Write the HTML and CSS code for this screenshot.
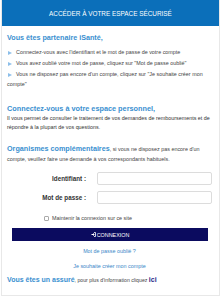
FILE: index.html
```html
<!DOCTYPE html>
<html lang="fr">

<head>
    <meta charset="UTF-8">
    <meta name="viewport" content="width=device-width, initial-scale=1.0">
    <title>Accès espace sécurisé</title>
    <link rel="stylesheet" href="styles.css">
</head>

<body>
    <div class="card">
        <div class="card-head">ACCÉDER À VOTRE ESPACE SÉCURISÉ</div>
        <div class="card-body">
            <h2 class="title-first">Vous êtes partenaire iSanté,</h2>
            <ul class="steps">
                <li><span class="arrow"></span>Connectez-vous avec l'identifiant et le mot de passe de votre compte</li>
                <li><span class="arrow"></span>Vous avez oublié votre mot de passe, cliquez sur "Mot de passe oublié"</li>
                <li><span class="arrow"></span>Vous ne disposez pas encore d'un compte, cliquez sur "Je souhaite créer mon compte"</li>
            </ul>

            <h2 class="title-second">Connectez-vous à votre espace personnel,</h2>
            <p class="intro">Il vous permet de consulter le traitement de vos demandes de remboursements et de répondre à la plupart de vos questions.</p>

            <p class="orgs"><strong>Organismes complémentaires</strong>, si vous ne disposez pas encore d'un compte, veuillez faire une demande à vos correspondants habituels.</p>

            <form class="login" onsubmit="return false;">
                <div class="field">
                    <label for="login">Identifiant :</label>
                    <input type="text" id="login">
                </div>
                <div class="field">
                    <label for="password">Mot de passe :</label>
                    <input type="password" id="password">
                </div>
                <div class="remember">
                    <input type="checkbox" id="remember">
                    <label for="remember">Maintenir la connexion sur ce site</label>
                </div>
                <button type="submit" class="btn-login">
                    <svg width="5" height="5" viewBox="0 0 10 10">
                        <path d="M6 1h3v8H6" fill="none" stroke="#fff" stroke-width="1.6"/>
                        <path d="M1 4h3V2l3.5 3L4 8V6H1z" fill="#fff"/>
                    </svg>
                    CONNEXION
                </button>
            </form>

            <div class="links">
                <a href="#">Mot de passe oublié ?</a>
                <a href="#">Je souhaite créer mon compte</a>
            </div>

            <p class="insured"><strong>Vous êtes un assuré</strong>, pour plus d'information cliquez <a href="#">ici</a></p>
        </div>
    </div>
</body>

</html>
```

FILE: styles.css
```css
/* Base */
body {
    background-color: #fff;
    font-family: "Liberation Sans", Arial, sans-serif;
    margin: 0;
    padding: 0;
    color: #444;
}

.card {
    margin: 0 1px;
    height: 296px;
    box-sizing: border-box;
    border: 1px solid #e8e8e8;
    border-top: none;
}

.card-head {
    background-color: #0b6fba;
    color: #fff;
    text-align: center;
    font-size: 6.4px;
    line-height: 8px;
    padding: 10px 0 8px;
}

.card-body {
    padding: 0 7px 0 5px;
}

h2 {
    color: #3a90d0;
    font-size: 7.2px;
    line-height: 9px;
    margin: 0;
}

.title-first {
    margin-top: 7px;
}

.steps {
    list-style: none;
    margin: 5px 0 0;
    padding: 0;
    font-size: 5.4px;
    line-height: 10px;
}

.steps li {
    margin-bottom: 1px;
}

.arrow {
    display: inline-block;
    width: 0;
    height: 0;
    border-left: 4px solid #8dbfea;
    border-top: 2.5px solid transparent;
    border-bottom: 2.5px solid transparent;
    margin: 0 4px 0 1px;
    vertical-align: -1px;
}

.title-second {
    font-size: 7.3px;
    margin-top: 15px;
}

.intro {
    font-size: 5.4px;
    line-height: 8.5px;
    margin: 1px 0 0;
    color: #333;
}

.orgs {
    font-size: 5.4px;
    line-height: 10px;
    margin: 13px 0 0;
}

.orgs strong {
    color: #3a90d0;
    font-size: 7.2px;
    line-height: 8px;
}

.login {
    margin-top: 8px;
}

.field {
    display: flex;
    align-items: center;
    margin-bottom: 6px;
}

.field label {
    width: 79px;
    text-align: right;
    font-weight: bold;
    font-size: 6.3px;
    color: #333;
    margin-right: 11px;
}

.field input {
    flex: 1;
    height: 13px;
    box-sizing: border-box;
    border: 1px solid #dcdcdc;
    border-radius: 2px;
    margin: 0;
    padding: 0 3px;
    font-size: 6px;
}

.remember {
    display: flex;
    align-items: center;
    margin: 10px 0 0 37px;
    font-size: 5.4px;
    line-height: 8px;
}

.remember input {
    appearance: none;
    width: 5px;
    height: 5px;
    margin: 0 3px 0 0;
    border: 1px solid #aaa;
    border-radius: 1px;
    background: #fff;
}

.btn-login {
    display: flex;
    align-items: center;
    justify-content: center;
    gap: 1px;
    width: 196px;
    height: 13px;
    margin: 6px 0 0 5px;
    padding: 0;
    border: none;
    background-color: #0b0b5f;
    color: #fff;
    font-family: "Liberation Sans", Arial, sans-serif;
    font-size: 5.4px;
    cursor: pointer;
}

.links {
    display: flex;
    flex-direction: column;
    align-items: center;
    gap: 7px;
    margin-top: 6px;
    font-size: 5.4px;
    line-height: 8px;
}

.links a {
    color: #3a86c8;
    text-decoration: none;
}

.insured {
    margin: 5px 0 0;
    font-size: 5.2px;
    line-height: 9px;
}

.insured strong {
    color: #3a90d0;
    font-size: 7px;
}

.insured a {
    color: #2b2b8a;
    font-weight: bold;
    font-size: 7px;
    text-decoration: none;
}
```
